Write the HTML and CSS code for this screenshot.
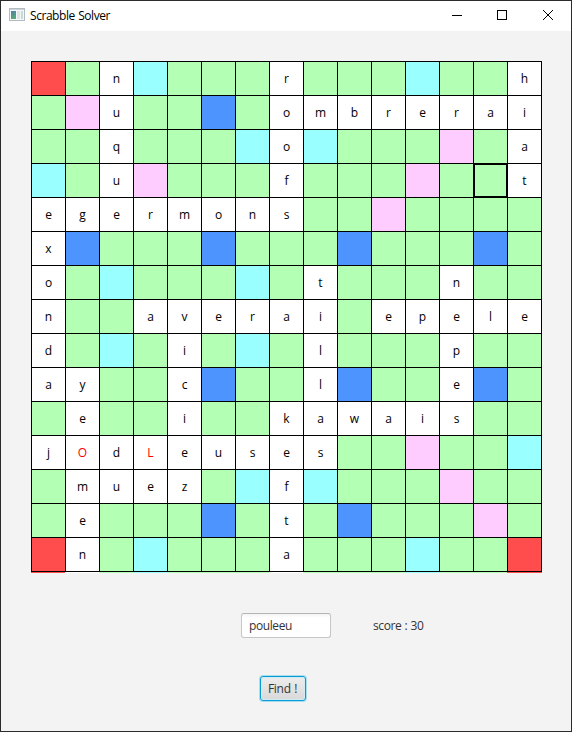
FILE: index.html
```html
<!DOCTYPE html>
<html lang="en">
<head>
<meta charset="utf-8">
<title>Scrabble Solver</title>
<link rel="stylesheet" href="styles.css">
</head>
<body>
<div class="window">
  <header class="titlebar">
    <svg class="app-icon" width="16" height="13" viewBox="0 0 16 13">
      <defs><linearGradient id="pane" x1="0" y1="0" x2="0.4" y2="1"><stop offset="0" stop-color="#4a7fae"/><stop offset="1" stop-color="#5aa876"/></linearGradient></defs>
      <rect x="0.5" y="0.5" width="15" height="12" fill="#f5f7f8" stroke="#b3bbc2"/>
      <rect x="1" y="1" width="14" height="1" fill="#ccd3d9"/>
      <rect x="2" y="3" width="5" height="8" fill="url(#pane)"/>
      <rect x="8" y="3" width="3" height="8" fill="#dde4e8"/>
      <rect x="12" y="3" width="2" height="8" fill="#c5dcd4"/>
    </svg>
    <h1 class="title">Scrabble Solver</h1>
    <svg class="control" width="45" height="30" viewBox="0 0 45 30"><path d="M17 14.5h10" stroke="#000"/></svg>
    <svg class="control" width="45" height="30" viewBox="0 0 45 30"><rect x="17.5" y="9.5" width="9" height="9" fill="none" stroke="#000"/></svg>
    <svg class="control" width="46" height="30" viewBox="0 0 46 30"><path d="M18 9l10 10M28 9l-10 10" stroke="#000" stroke-width="1"/></svg>
  </header>
  <main class="content">
    <div class="board" id="board"></div>
    <div class="fields">
      <input class="rack" type="text" value="pouleeu" aria-label="Rack">
      <span class="score">score : 30</span>
    </div>
    <button class="find" type="button">Find !</button>
  </main>
</div>
<script src="board.js"></script>
</body>
</html>
```
FILE: board.js
```js
// Lowercase letters are tiles, O and L are blanks played as letters.
// "." plain, "2" double letter, "3" triple letter, "#" double word, "*" triple word.
const rows = [
  "*.n2...r...2..h",
  ".#u..3.ombrerai",
  "..q...2o2...#.a",
  "2.u#...f...#..t",
  "egermons..#....",
  "x3...3...3...3.",
  "o.2...2.t...n..",
  "n..averai.epele",
  "d.2.i.2.l...p..",
  "ay..c3..l3..e3.",
  ".e..i..kawais..",
  "jOdLeuses..#..2",
  ".muez.2f2...#..",
  ".e...3.t.3...#.",
  "*n.2...a...2..*"
];
const kinds = { ".": "plain", "2": "double-letter", "3": "triple-letter", "#": "double-word", "*": "triple-word" };
const board = document.getElementById("board");
rows.forEach((row, y) => [...row].forEach((mark, x) => {
  const cell = document.createElement("div");
  if (kinds[mark]) {
    cell.className = "cell " + kinds[mark];
  } else {
    cell.className = mark < "a" ? "cell blank" : "cell";
    cell.textContent = mark;
  }
  if (x === 13 && y === 3) cell.classList.add("selected");
  board.appendChild(cell);
}));
```
FILE: styles.css
```css
* { box-sizing: border-box; }
body {
  margin: 0;
  font: 12px/16px "Open Sans", "Noto Sans", sans-serif;
  color: #333;
}
.window {
  width: 572px;
  height: 732px;
  border: 1px solid #2b2b2b;
  background: #f3f3f3;
}
.titlebar {
  display: flex;
  align-items: center;
  height: 30px;
  padding-left: 8px;
  background: #fff;
}
.app-icon { margin-top: -3px; }
.title {
  flex: 1;
  margin: 0 0 0 5px;
  font-size: 12px;
  font-weight: 400;
  letter-spacing: -0.45px;
  word-spacing: 0.8px;
  color: #000;
}
.content {
  display: flex;
  flex-direction: column;
  padding: 30px 0 0 30px;
}
.board {
  display: grid;
  grid-template-columns: repeat(15, 34px);
  grid-auto-rows: 34px;
  width: 511px;
  height: 511px;
}
.cell {
  width: 35px;
  height: 35px;
  padding-top: 9px;
  border: 1px solid #000;
  background: #fff;
  text-align: center;
  color: #000;
}
.blank { color: #f00; }
.plain { background: #b3ffb3; }
.double-letter { background: #99ffff; }
.triple-letter { background: #4d94ff; }
.double-word { background: #ffccff; }
.triple-word { background: #ff4d4d; }
.selected { position: relative; z-index: 1; border-width: 2px; }
.cell:nth-child(n + 211) { box-shadow: 0 1px #fff; }
.plain:nth-child(n + 211) { box-shadow: 0 1px #b3ffb3; }
.double-letter:nth-child(n + 211) { box-shadow: 0 1px #99ffff; }
.triple-word:nth-child(n + 211) { box-shadow: 0 1px #ff4d4d; }
.fields {
  display: flex;
  align-items: center;
  margin: 41px 0 0 210px;
}
.rack {
  width: 90px;
  height: 25px;
  margin: 0;
  padding: 0 7px;
  border: 1px solid #c6c6c6;
  border-top-color: #b5b5b5;
  border-radius: 3px;
  background: linear-gradient(#f4f4f4, #fff 4px);
  font: inherit;
  letter-spacing: -0.4px;
  color: #333;
}
.score { margin-left: 42px; letter-spacing: -0.4px; word-spacing: 0.5px; }
.find {
  width: 46px;
  height: 25px;
  margin: 38px 0 0 229px;
  padding: 0 1px 0 0;
  border: 1px solid #039ed3;
  border-radius: 3px;
  background: linear-gradient(#ededed, #d9d9d9);
  box-shadow: 0 0 0 1px #a9dcec, inset 0 0 0 1px #d4ebf3;
  font: inherit;
  letter-spacing: -0.25px;
  word-spacing: 0.5px;
  color: #333;
}
```
